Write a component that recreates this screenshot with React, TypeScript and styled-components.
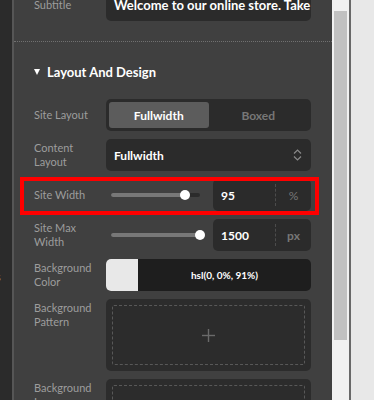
import React from 'react';
import styled, { createGlobalStyle } from 'styled-components';

const GlobalStyle = createGlobalStyle`
  html, body {
    margin: 0;
    padding: 0;
    background: #404040;
  }
  body {
    font-family: Lato, "Open Sans", "Liberation Sans", sans-serif;
  }
`;

const Frame = styled.div`
  display: flex;
  width: 374px;
  height: 400px;
  overflow: hidden;
`;

const Rail = styled.div`
  width: 12px;
  background-color: #2b2b2b;
  display: flex;
  flex-direction: column;
  align-items: flex-start;
  padding-top: 176px;
  overflow: hidden;
`;

const RailMark = styled.span<{ $gap: number }>`
  margin-top: ${p => p.$gap}px;
  margin-left: -4px;
  font-size: 11px;
  line-height: 12px;
  color: #9d9d9d;
`;

const RailEdge = styled.div`
  width: 2px;
  background-color: #565656;
`;

const Panel = styled.div`
  width: 318px;
  background-color: #404040;
  overflow: hidden;
`;

const Scrolled = styled.div`
  margin-top: -11px;
`;

const TopSection = styled.div`
  padding: 0 21px 20px 20px;
`;

const Separator = styled.div`
  border-top: 1px dotted #707070;
`;

const Section = styled.div`
  padding: 21px 21px 0 20px;
`;

const SectionTitle = styled.div`
  display: flex;
  align-items: center;
  gap: 7px;
  height: 18px;
  margin-bottom: 18px;
  color: #fff;
  font-size: 13px;
  font-weight: 700;
`;

const Caret = styled.span`
  width: 0;
  height: 0;
  border-left: 3.5px solid transparent;
  border-right: 3.5px solid transparent;
  border-top: 6px solid #fff;
`;

const Fields = styled.div`
  display: flex;
  flex-direction: column;
  gap: 8px;
`;

const Field = styled.div<{ $highlight?: boolean }>`
  position: relative;
  display: grid;
  grid-template-columns: 72px 1fr;
  align-items: start;

  ${p =>
    p.$highlight &&
    `
    &::after {
      content: '';
      position: absolute;
      top: -2px;
      bottom: -4px;
      left: -14px;
      right: -8px;
      border: 4px solid #ff0000;
      pointer-events: none;
    }
  `}
`;

const Label = styled.div`
  display: flex;
  align-items: center;
  min-height: 32px;
  font-size: 11px;
  line-height: 14px;
  color: #9d9d9d;
`;

const TextInput = styled.div`
  height: 32px;
  box-sizing: border-box;
  padding: 0 8px;
  display: flex;
  align-items: center;
  background-color: #2b2b2b;
  border-radius: 5px;
  overflow: hidden;
  white-space: nowrap;
  color: #fff;
  font-size: 13px;
  font-weight: 700;
`;

const Segmented = styled.div`
  display: flex;
  height: 32px;
  box-sizing: border-box;
  padding: 3px;
  background-color: #2b2b2b;
  border-radius: 5px;
`;

const Segment = styled.div<{ $active?: boolean }>`
  flex: 1;
  display: flex;
  align-items: center;
  justify-content: center;
  border-radius: 3px;
  background-color: ${p => (p.$active ? '#5c5c5c' : 'transparent')};
  color: ${p => (p.$active ? '#fff' : '#777')};
  font-size: 12px;
  font-weight: 700;
`;

const Select = styled.div`
  height: 32px;
  box-sizing: border-box;
  padding: 0 9px 0 8px;
  display: flex;
  align-items: center;
  justify-content: space-between;
  background-color: #2b2b2b;
  border-radius: 5px;
  color: #fff;
  font-size: 12px;
  font-weight: 700;
`;

const SliderGroup = styled.div`
  display: flex;
  align-items: center;
  gap: 8px;
`;

const Slider = styled.div`
  flex: 1;
  height: 32px;
  padding: 0 5px;
  display: flex;
  align-items: center;
`;

const Track = styled.div`
  position: relative;
  flex: 1;
  height: 4px;
  border-radius: 2px;
  background-color: #2b2b2b;
`;

const Fill = styled.div`
  height: 100%;
  border-radius: 2px;
  background-color: #787878;
`;

const Thumb = styled.div`
  position: absolute;
  top: 50%;
  width: 10px;
  height: 10px;
  margin: -5px 0 0 -5px;
  border-radius: 50%;
  background-color: #fff;
`;

const NumberInput = styled.div`
  width: 98px;
  height: 32px;
  display: flex;
  align-items: center;
  background-color: #2b2b2b;
  border-radius: 5px;
`;

const NumberValue = styled.span`
  flex: 1;
  padding-left: 8px;
  color: #fff;
  font-size: 12px;
  font-weight: 700;
`;

const Unit = styled.span<{ $bold?: boolean }>`
  width: 35px;
  height: 22px;
  display: flex;
  align-items: center;
  justify-content: center;
  border-left: 1px dashed #4c4c4c;
  color: #777;
  font-size: 12px;
  font-weight: ${p => (p.$bold ? 700 : 400)};
`;

const ColorBox = styled.div`
  display: flex;
  height: 32px;
  border-radius: 5px;
  overflow: hidden;
  background-color: #1e1e1e;
`;

const Swatch = styled.div<{ $color: string }>`
  width: 32px;
  background-color: ${p => p.$color};
`;

const ColorText = styled.div`
  flex: 1;
  display: flex;
  align-items: center;
  justify-content: center;
  color: #fff;
  font-size: 10px;
  font-weight: 700;
`;

const DropZone = styled.div`
  height: 72px;
  box-sizing: border-box;
  padding: 6px;
  display: flex;
  background-color: #2c2c2c;
  border-radius: 5px;
`;

const DropInner = styled.div`
  flex: 1;
  display: flex;
  align-items: center;
  justify-content: center;
  border: 1px dashed #585858;
  border-radius: 2px;
`;

const ScrollTrack = styled.div`
  width: 17px;
  box-sizing: border-box;
  padding: 11px 2px 0;
  background-color: #f1f1f1;
`;

const ScrollThumb = styled.div`
  height: 329px;
  background-color: #c1c1c1;
`;

const WindowEdge = styled.div`
  width: 2px;
  background-color: #686868;
`;

const Outside = styled.div`
  flex: 1;
  background-color: #e8e8e8;
`;

const ChevronsIcon = () => (
  <svg width="9" height="12" viewBox="0 0 9 12" fill="none" stroke="#8a8a8a" strokeWidth="1.2">
    <polyline points="1,4.5 4.5,1 8,4.5" />
    <polyline points="1,7.5 4.5,11 8,7.5" />
  </svg>
);

const PlusIcon = () => (
  <svg width="13" height="13" viewBox="0 0 13 13" stroke="#6a6a6a" strokeWidth="1.4">
    <line x1="6.5" y1="0" x2="6.5" y2="13" />
    <line x1="0" y1="6.5" x2="13" y2="6.5" />
  </svg>
);

interface IRangeProps {
  value: string;
  unit: string;
  percent: number;
  boldUnit?: boolean;
}

const RangeControl: React.FC<IRangeProps> = ({ value, unit, percent, boldUnit }) => (
  <SliderGroup>
    <Slider>
      <Track>
        <Fill style={{ width: `${percent}%` }} />
        <Thumb style={{ left: `${percent}%` }} />
      </Track>
    </Slider>
    <NumberInput>
      <NumberValue>{value}</NumberValue>
      <Unit $bold={boldUnit}>{unit}</Unit>
    </NumberInput>
  </SliderGroup>
);

const App: React.FC = () => {
  return (
    <>
      <GlobalStyle />
      <Frame>
        <Rail>
          <RailMark $gap={0}>-</RailMark>
          <RailMark $gap={53}>-</RailMark>
          <RailMark $gap={18}>s</RailMark>
        </Rail>
        <RailEdge />
        <Panel>
          <Scrolled>
            <TopSection>
              <Field>
                <Label>Subtitle</Label>
                <TextInput>Welcome to our online store. Take advantage of our offers</TextInput>
              </Field>
            </TopSection>
            <Separator />
            <Section>
              <SectionTitle>
                <Caret />
                Layout And Design
              </SectionTitle>
              <Fields>
                <Field>
                  <Label>Site Layout</Label>
                  <Segmented>
                    <Segment $active>Fullwidth</Segment>
                    <Segment>Boxed</Segment>
                  </Segmented>
                </Field>
                <Field>
                  <Label>
                    Content
                    <br />
                    Layout
                  </Label>
                  <Select>
                    Fullwidth
                    <ChevronsIcon />
                  </Select>
                </Field>
                <Field $highlight>
                  <Label>Site Width</Label>
                  <RangeControl value="95" unit="%" percent={83} />
                </Field>
                <Field>
                  <Label>
                    Site Max
                    <br />
                    Width
                  </Label>
                  <RangeControl value="1500" unit="px" percent={100} boldUnit />
                </Field>
                <Field>
                  <Label>
                    Background
                    <br />
                    Color
                  </Label>
                  <ColorBox>
                    <Swatch $color="hsl(0, 0%, 91%)" />
                    <ColorText>hsl(0, 0%, 91%)</ColorText>
                  </ColorBox>
                </Field>
                <Field>
                  <Label>
                    Background
                    <br />
                    Pattern
                  </Label>
                  <DropZone>
                    <DropInner>
                      <PlusIcon />
                    </DropInner>
                  </DropZone>
                </Field>
                <Field>
                  <Label>
                    Background
                    <br />
                    Image
                  </Label>
                  <DropZone>
                    <DropInner>
                      <PlusIcon />
                    </DropInner>
                  </DropZone>
                </Field>
              </Fields>
            </Section>
          </Scrolled>
        </Panel>
        <ScrollTrack>
          <ScrollThumb />
        </ScrollTrack>
        <WindowEdge />
        <Outside />
      </Frame>
    </>
  );
};

export default App;
